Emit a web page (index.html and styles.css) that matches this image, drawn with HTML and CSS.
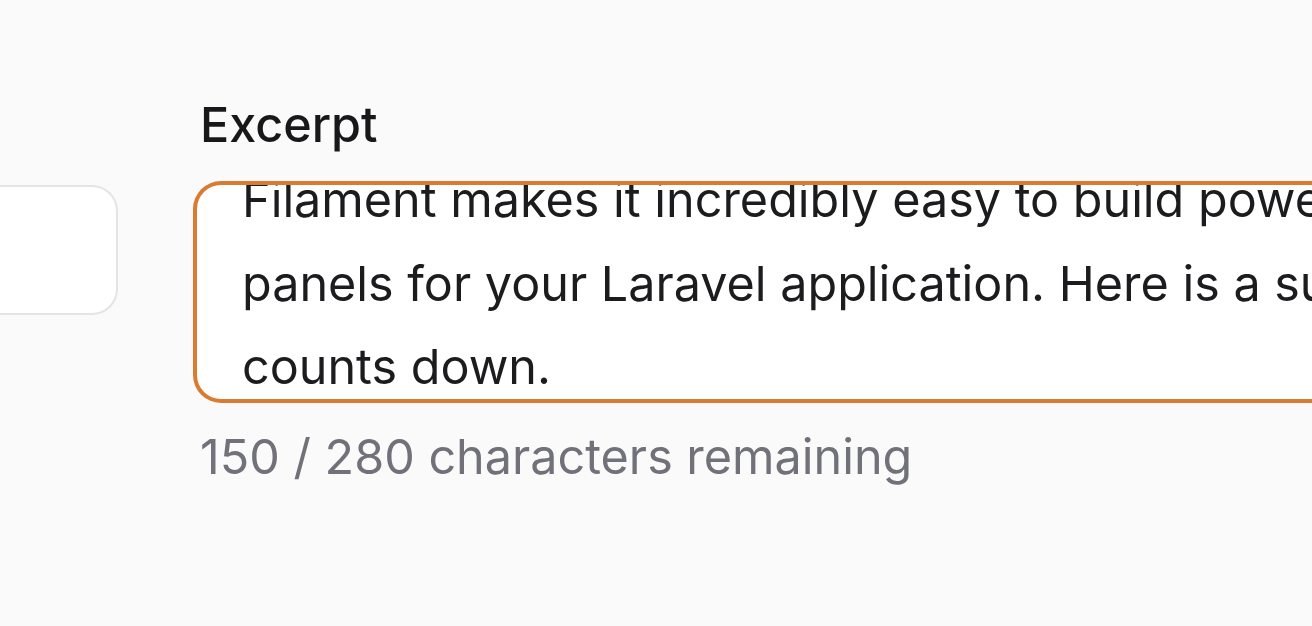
FILE: index.html
```html
<!DOCTYPE html>
<html lang="en">
<head>
<meta charset="utf-8">
<title>Excerpt</title>
<link rel="stylesheet" href="styles.css">
</head>
<body>
<main class="form-row">
  <div class="side-field">
    <div class="side-input"></div>
  </div>
  <div class="field">
    <label class="field-label" for="excerpt">Excerpt</label>
    <div class="textarea" id="excerpt">
      <div class="textarea-content">
        <span class="line">Filament makes it incredibly easy to build powerful admin</span>
        <span class="line">panels for your Laravel application. Here is a sub-heading that</span>
        <span class="line">counts down.</span>
      </div>
    </div>
    <p class="field-hint">150 / 280 characters remaining</p>
  </div>
</main>
</body>
</html>
```

FILE: styles.css
```css
html, body {
  margin: 0;
  padding: 0;
  background: #fafafa;
  overflow: hidden;
}

body {
  width: 1312px;
  height: 626px;
  font-family: Inter, "Noto Sans", sans-serif;
  font-size: 48.5px;
  -webkit-font-smoothing: antialiased;
}

.form-row {
  display: flex;
  gap: 75px;
  padding-top: 91px;
}

.side-field {
  width: 118px;
  flex: none;
  padding-top: 94px;
}

.side-input {
  height: 130px;
  background: #ffffff;
  border: 2px solid #e4e4e7;
  border-left: none;
  border-radius: 0 26px 26px 0;
  box-sizing: border-box;
}

.field {
  flex: none;
  width: 1119px;
  display: flex;
  flex-direction: column;
}

.field-label {
  display: block;
  padding-left: 7px;
  font-weight: 500;
  line-height: 68.6px;
  color: #18181b;
  margin-bottom: 21px;
}

.textarea {
  height: 222px;
  box-sizing: border-box;
  border: 4.5px solid #d97b30;
  border-radius: 28px 0 0 28px;
  border-right: none;
  background: #ffffff;
  overflow: hidden;
  padding: 0 0 0 45px;
}

.textarea-content {
  margin-top: -26.5px;
  line-height: 83.5px;
  color: #1c1c1f;
}

.line {
  display: block;
  white-space: nowrap;
}

.field-hint {
  margin: 20px 0 0;
  padding-left: 7px;
  line-height: 68.6px;
  color: #71717a;
}
```
